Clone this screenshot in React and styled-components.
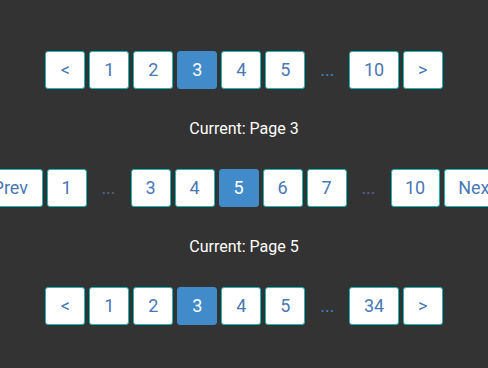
import React from "react";
import styled, { createGlobalStyle } from "styled-components";

const Global = createGlobalStyle`
  html, body { margin: 0; padding: 0; background: #333333; }
  body { font-family: Roboto, "Liberation Sans", Arial, sans-serif; overflow: hidden; }
`;

const Page = styled.div`
  width: 488px;
  height: 368px;
  overflow: hidden;
  padding-top: 51px;
  box-sizing: border-box;
  display: flex;
  flex-direction: column;
  align-items: center;
  gap: 30px;
`;

const Pager = styled.nav`
  width: 488px;
  display: flex;
  justify-content: center;
  align-items: center;
  gap: 4px;
`;

const PageButton = styled.button`
  flex: none;
  box-sizing: border-box;
  height: 38px;
  min-width: 40px;
  padding: 0 13.5px;
  margin: 0;
  border: 1px solid ${(p) => (p.$active ? "#428bca" : "#1fb5b5")};
  border-radius: 3px;
  background: ${(p) => (p.$active ? "#428bca" : "#ffffff")};
  color: ${(p) => (p.$active ? "#ffffff" : "#4a78b4")};
  font-family: Roboto, "Liberation Sans", Arial, sans-serif;
  font-size: 18px;
  line-height: 1;
  display: flex;
  align-items: center;
  justify-content: center;
  cursor: pointer;
`;

const Ellipsis = styled.span`
  flex: none;
  width: 36px;
  height: 38px;
  display: flex;
  align-items: center;
  justify-content: center;
  color: ${(p) => p.$color};
  font-size: 18px;
  line-height: 1;
`;

const Label = styled.div`
  color: #ffffff;
  font-size: 16px;
  line-height: 20px;
`;

function Pagination({ items, current, dotColor = "#3f7dc8" }) {
  return (
    <Pager>
      {items.map((it, i) =>
        it === "..." ? (
          <Ellipsis key={i} $color={dotColor}>...</Ellipsis>
        ) : (
          <PageButton key={i} $active={it === String(current)}>
            {it}
          </PageButton>
        )
      )}
    </Pager>
  );
}

export default function App() {
  return (
    <>
      <Global />
      <Page>
        <Pagination items={["<", "1", "2", "3", "4", "5", "...", "10", ">"]} current={3} />
        <Label>Current: Page 3</Label>
        <Pagination
          items={["Prev", "1", "...", "3", "4", "5", "6", "7", "...", "10", "Next"]}
          current={5}
          dotColor="#52678f"
        />
        <Label>Current: Page 5</Label>
        <Pagination items={["<", "1", "2", "3", "4", "5", "...", "34", ">"]} current={3} />
      </Page>
    </>
  );
}
